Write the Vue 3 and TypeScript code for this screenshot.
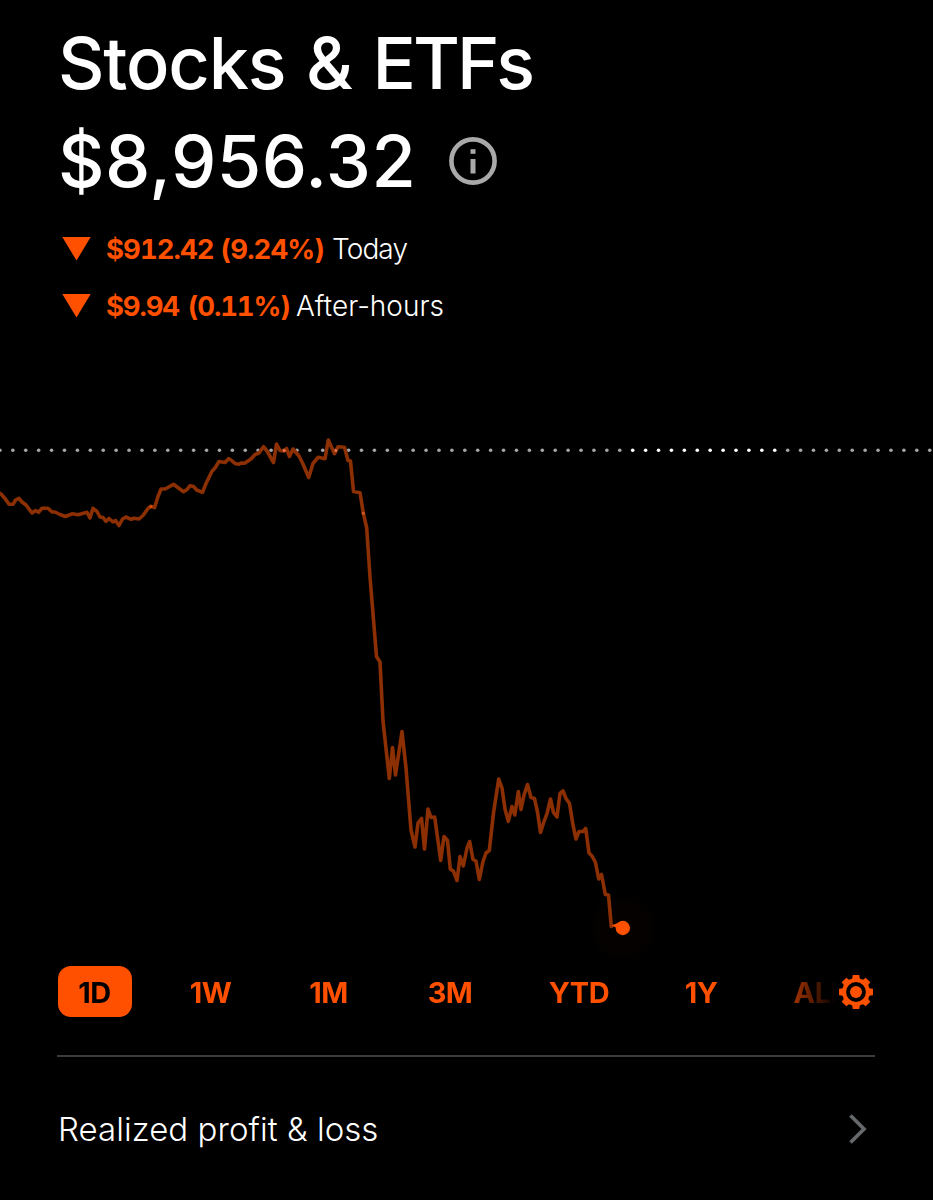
<script setup lang="ts">
interface Change {
  amount: string
  period: string
  kind: string
}

const changes: Change[] = [
  { amount: '$912.42 (9.24%)', period: 'Today', kind: 'today' },
  { amount: '$9.94 (0.11%)', period: 'After-hours', kind: 'after' },
]

const ranges: string[] = ['1D', '1W', '1M', '3M', 'YTD', '1Y', 'ALL']
const activeRange = '1D'

// Previous-close line: evenly spaced dots, brighter over the after-hours session
const dots = Array.from({ length: 73 }, (_, i) => ({
  x: -0.1 + i * 12.914,
  bright: i >= 49 && i <= 60,
}))

const series: [number, number][] = [
  [-2, 492], [1, 494], [5, 498.5], [9, 504.3], [13, 504.3], [15.5, 500], [19, 498.3], [22, 502], [26, 505],
  [32, 513], [35.5, 510.5], [38.5, 512.3], [42, 508.3], [48, 508.3], [52, 512], [55, 512], [60, 514.5],
  [65.5, 516.5], [72, 513.8], [78, 514.8], [87, 512.3], [90, 518], [93, 508.3], [97, 511.5], [100, 517],
  [103, 517.5], [106, 521.3], [109, 518.5], [113, 522], [115.5, 520.5], [119, 525.5], [122.5, 519],
  [126, 517], [131, 519.3], [134, 518.3], [139, 519], [143, 515.5], [148, 508.5], [151, 506.3], [154.5, 507.7],
  [158, 496.5], [161, 489], [165, 489], [173.5, 484.3], [183.5, 491.7], [187, 489.5], [190, 485.7],
  [193.5, 486.5], [197, 490.3], [202.5, 492.3], [206, 483.5], [212, 471.3], [215, 468], [219, 461.5],
  [225, 462.5], [228.5, 458.7], [231, 460], [235, 463.5], [239, 464.2], [241, 463], [244.5, 463.3],
  [251, 459], [255, 454.5], [259, 453], [263.5, 446.7], [267, 451], [273.5, 462.5], [276.5, 444],
  [280, 450.5], [284, 451], [286.5, 448.5], [289.5, 456.5], [293, 449], [299, 456], [303, 464],
  [308.7, 477.5], [313, 463.5], [318, 457.3], [325, 458.7], [328.3, 440], [334.5, 453.7], [338, 446.8],
  [344.5, 447.3], [348, 460.5], [350.5, 461], [353.5, 491.5], [360, 492.8], [363.3, 513], [366.7, 528],
  [370, 577], [376.5, 656.5], [380, 662], [383, 721], [389.3, 778.5], [392.5, 747.5], [395.5, 775],
  [402, 731.5], [406, 768], [411, 830], [415, 847], [418, 823], [421.5, 818.5], [424.5, 849],
  [428, 809], [431, 817.5], [434.7, 817], [440.7, 860.5], [444, 836.5], [447.5, 840.5], [450.3, 869],
  [453.5, 871.3], [457, 880.5], [460, 856.5], [463.3, 866], [467, 848], [469.7, 841.5], [473, 859.5],
  [476, 861], [479.3, 879.5], [483, 861.5], [486, 853], [489.3, 850.5], [493.5, 813], [498.7, 779],
  [502, 788], [505, 809], [508.3, 821.3], [512, 806.5], [514.8, 815], [518.3, 791.5], [521, 809.5],
  [524, 795], [527.5, 784.5], [531, 797.5], [534.5, 798.5], [537.5, 812], [540.5, 832.5], [543.5, 823],
  [547, 813.5], [550.5, 799], [553.5, 812.5], [557, 817], [560, 793.5], [563, 791], [566, 798.5],
  [569.5, 803.5], [573, 825], [576, 839], [579, 831.5], [583, 831.5], [585.7, 828.5], [589, 853],
  [592, 856], [595.5, 862.5], [598.7, 879], [601.5, 874.5], [605.3, 894.5], [608.5, 895], [611.3, 926.5],
]
const linePoints: string = series.map(([x, y]) => `${x},${y}`).join(' ')

// Eight teeth, one every 45 degrees
const teeth: number[] = [0, 45, 90, 135, 180, 225, 270, 315]
</script>

<template>
  <main class="screen">
    <header class="summary">
      <h1 class="title">Stocks &amp; <span class="tight">ETFs</span></h1>
      <div class="balance-row">
        <span class="balance">$8,956.32</span>
        <svg class="info" viewBox="0 0 48 48" aria-label="Info">
          <circle cx="24" cy="24" r="21.6" fill="none" stroke="#a9a9a9" stroke-width="4.6" />
          <rect x="21.5" y="12.2" width="5" height="4.6" fill="#a9a9a9" />
          <rect x="21.5" y="22" width="5" height="14.5" fill="#a9a9a9" />
        </svg>
      </div>
      <div v-for="c in changes" :key="c.kind" class="change" :class="c.kind">
        <svg class="arrow" viewBox="0 0 29 24"><path d="M0.3 0H28.7L14.5 23.6Z" fill="#ff5000" /></svg>
        <span class="amount">{{ c.amount }}</span>
        <span class="period">{{ c.period }}</span>
      </div>
    </header>

    <svg class="chart" viewBox="0 336 933 630">
      <defs>
        <radialGradient id="glow">
          <stop offset="0" stop-color="#ff5000" stop-opacity="0.02" />
          <stop offset="0.75" stop-color="#ff5000" stop-opacity="0.015" />
          <stop offset="1" stop-color="#ff5000" stop-opacity="0" />
        </radialGradient>
      </defs>
      <circle
        v-for="(d, i) in dots"
        :key="i"
        :cx="d.x"
        cy="450.3"
        r="1.8"
        :fill="d.bright ? '#ffffff' : '#a4a6aa'"
      />
      <polyline
        :points="linePoints"
        fill="none"
        stroke="#8c2f02"
        stroke-width="3.6"
        stroke-linejoin="round"
        stroke-linecap="round"
      />
      <circle cx="284.2" cy="450.5" r="1.6" fill="#ee7050" />
      <circle cx="335.8" cy="450.5" r="1.5" fill="#dc7452" />
      <circle cx="151" cy="506.5" r="1.6" fill="#e04a04" />
      <circle cx="363.3" cy="513.2" r="1.5" fill="#d65a24" />
      <circle cx="623" cy="928" r="37" fill="url(#glow)" />
      <path d="M612.8 925.6L620 922.8L620 928Z" fill="#ff5000" stroke="#ff5000" stroke-width="1.4" stroke-linejoin="round" />
      <circle cx="622.8" cy="928" r="7.2" fill="#ff5000" />
    </svg>

    <nav class="range-bar">
      <div class="ranges">
        <button v-for="r in ranges" :key="r" class="range" :class="{ active: r === activeRange }">{{ r }}</button>
      </div>
      <svg class="gear" viewBox="-17 -17 34 34" aria-label="Chart settings">
        <circle r="11.8" fill="none" stroke="#ff5000" stroke-width="3.8" />
        <path
          v-for="a in teeth"
          :key="a"
          d="M-5.2 -12L-3.6 -14.2L-3.3 -17H3.3L3.6 -14.2L5.2 -12Z"
          fill="#ff5000"
          :transform="`rotate(${a})`"
        />
        <circle r="6" fill="#ff5000" />
      </svg>
    </nav>

    <div class="realized">
      <span class="realized-label">Realized profit &amp; loss</span>
      <svg class="chevron" viewBox="0 0 20 32">
        <path d="M2.5 2.5L16 16L2.5 29.5" fill="none" stroke="#66696c" stroke-width="3.7" />
      </svg>
    </div>
  </main>
</template>

<style>
html,
body {
  background: #000;
}
</style>

<style scoped>
.screen {
  width: 933px;
  height: 1200px;
  overflow: hidden;
  background: #000;
  color: #fff;
  font-family: Inter, "Liberation Sans", sans-serif;
  box-sizing: border-box;
}
.summary {
  height: 336px;
  padding: 20px 58px 0;
  box-sizing: border-box;
}
.title {
  margin: 0;
  height: 86px;
  line-height: 86px;
  font-size: 72px;
  font-weight: 500;
  letter-spacing: -1.15px;
  word-spacing: 2.5px;
  white-space: nowrap;
}
.tight {
  letter-spacing: -3px;
}
.balance-row {
  display: flex;
  align-items: center;
  height: 110px;
}
.balance {
  width: 391px;
  font-size: 72px;
  font-weight: 500;
  letter-spacing: 0.5px;
  line-height: 110px;
  white-space: nowrap;
}
.info {
  width: 48px;
  height: 48px;
}
.change {
  display: flex;
  align-items: center;
  height: 57px;
  padding-top: 9px;
  box-sizing: border-box;
  margin-left: 4px;
  font-size: 28px;
  line-height: 48px;
  white-space: nowrap;
}
.arrow {
  width: 29px;
  height: 24px;
  margin-right: 15px;
}
.amount {
  color: #ff5000;
  font-size: 27.5px;
  font-weight: 700;
  font-variant-numeric: tabular-nums;
}
.period {
  font-weight: 300;
}
.today .amount {
  width: 219px;
  margin-right: 7px;
  letter-spacing: -0.95px;
  word-spacing: 0.5px;
}
.today .period {
  letter-spacing: -0.9px;
}
.after .amount {
  width: 182px;
  margin-right: 8px;
  letter-spacing: -1.15px;
  word-spacing: 2.5px;
}
.chart {
  display: block;
  width: 933px;
  height: 630px;
}
.range-bar {
  display: flex;
  align-items: center;
  height: 51px;
  padding-left: 57.5px;
}
.ranges {
  display: grid;
  grid-template-columns: 74px 80px 78px 87px 93px 73px 87px;
  column-gap: 39px;
  width: 803px;
  margin-right: -21.5px;
  mask-image: linear-gradient(to right, #000 712px, transparent 778px);
}
.range {
  height: 51px;
  padding: 2px 0 0;
  border: 0;
  border-radius: 13px;
  background: none;
  color: #ff5000;
  font-family: inherit;
  font-size: 29px;
  font-weight: 700;
  letter-spacing: -0.5px;
  line-height: 49px;
  text-align: center;
}
.range.active {
  background: #ff5000;
  color: #000;
}
.gear {
  flex: none;
  width: 34px;
  height: 34px;
}
.realized {
  display: flex;
  align-items: center;
  justify-content: space-between;
  height: 146px;
  margin: 38px 58px 0 57px;
  padding-right: 7px;
  border-top: 2px solid #3c3c3e;
  box-sizing: border-box;
  font-size: 33px;
  font-weight: 300;
}
.realized-label {
  margin-left: 1px;
  letter-spacing: 0.05px;
}
.chevron {
  width: 20px;
  height: 32px;
}
</style>
